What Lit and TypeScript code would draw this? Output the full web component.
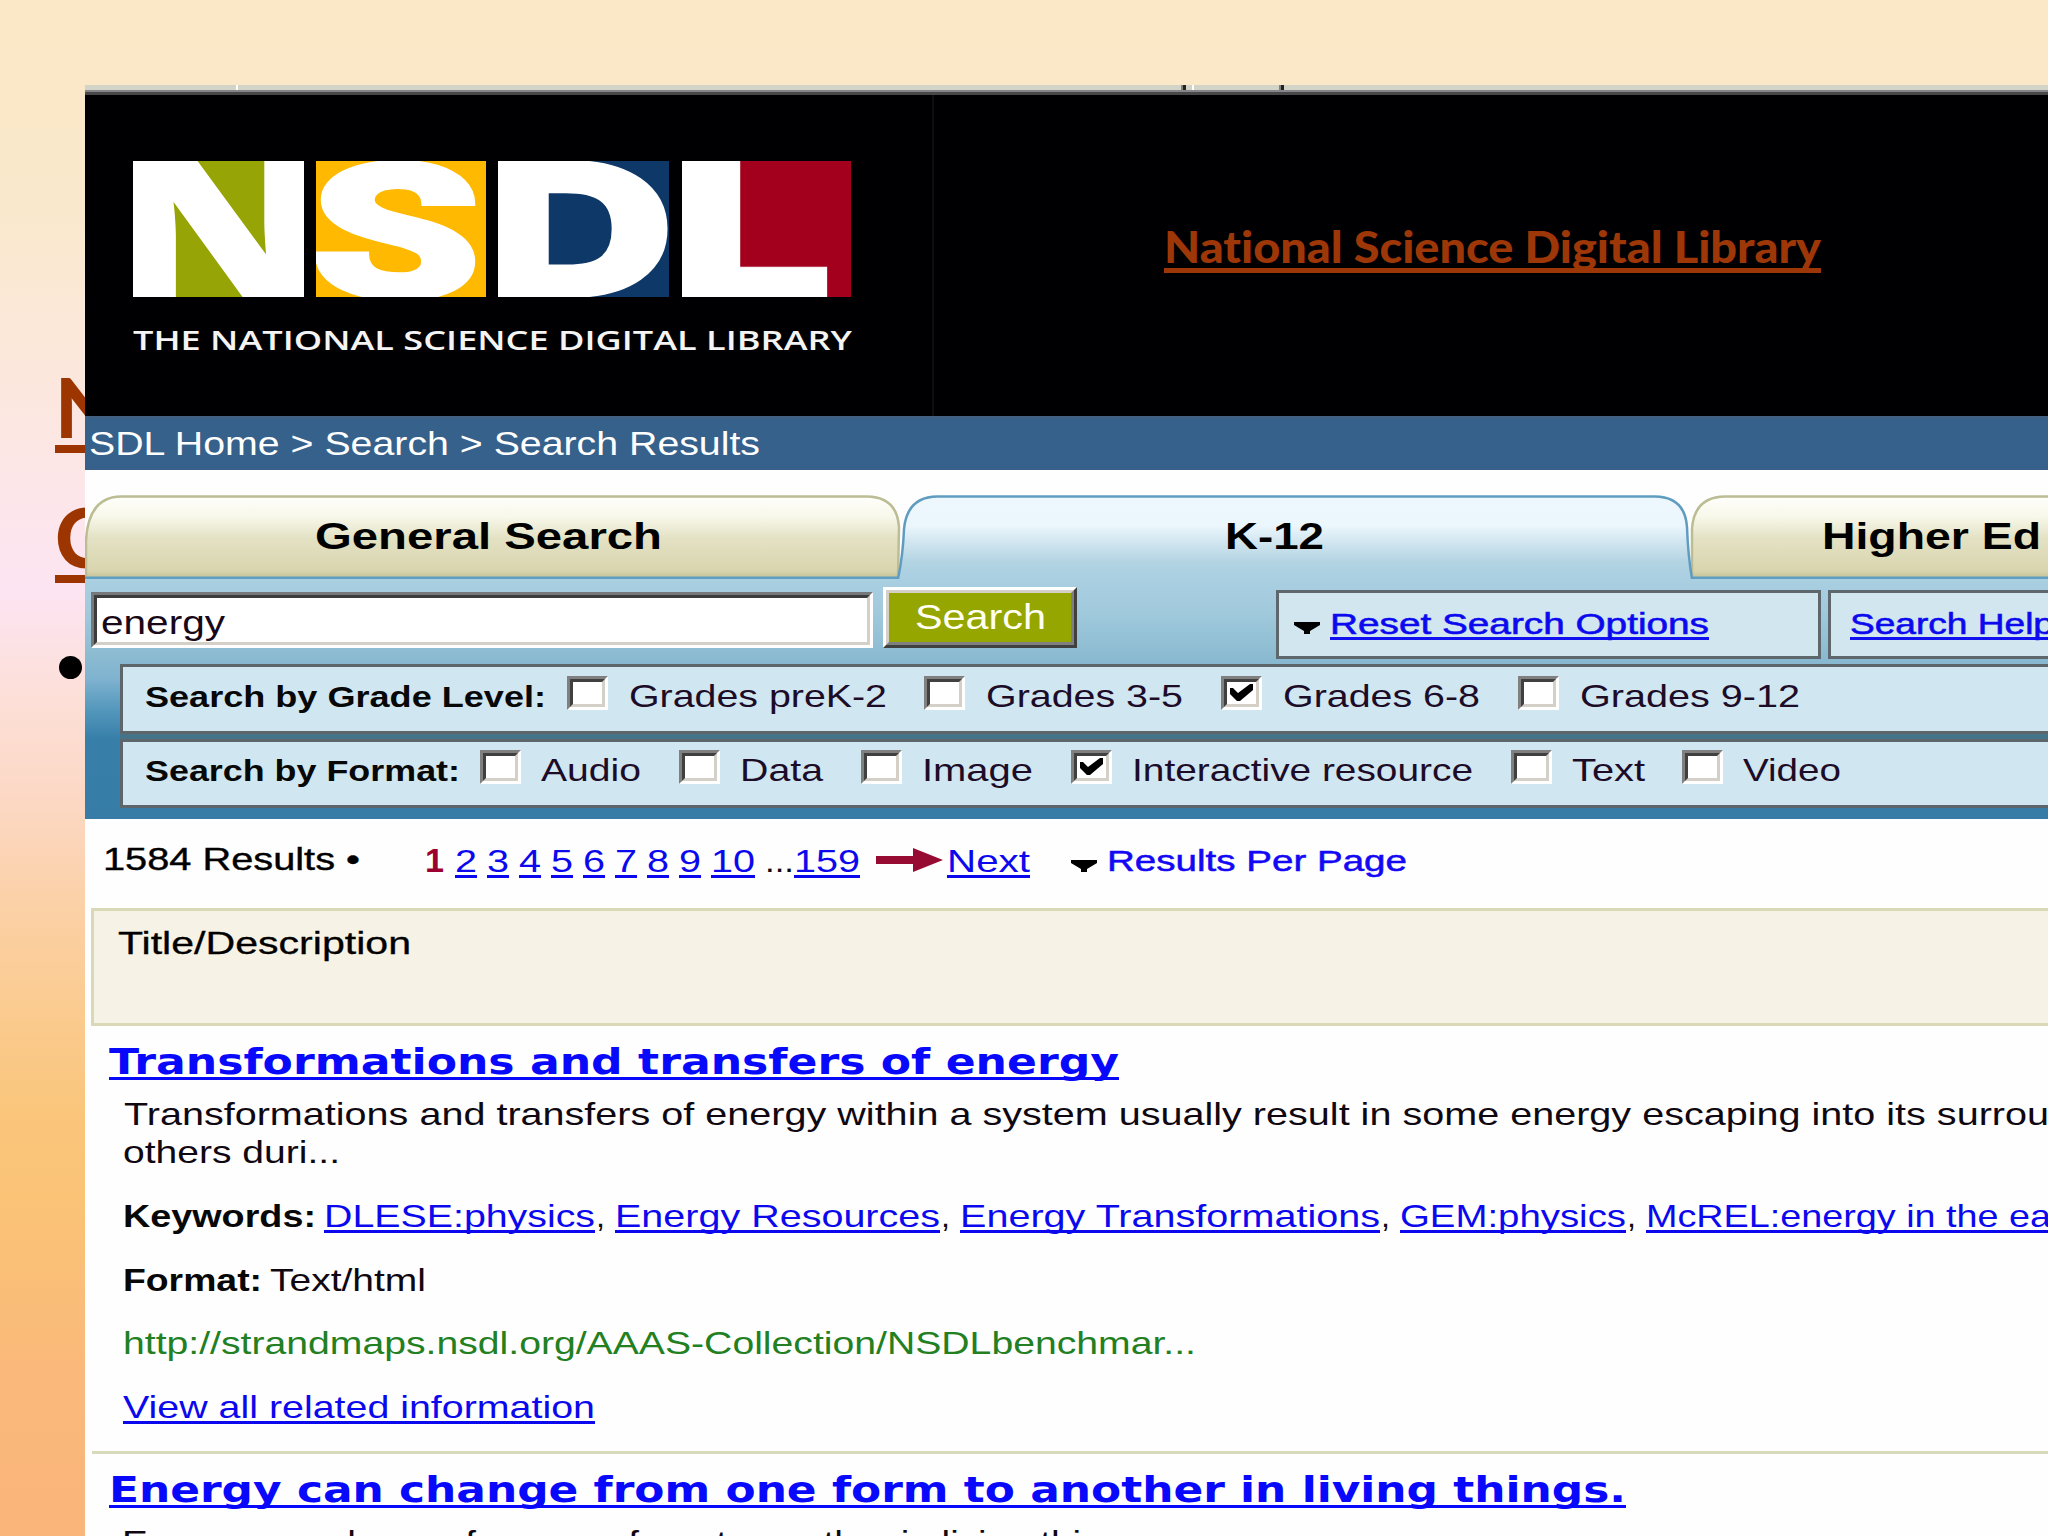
import { LitElement, html, svg, css, nothing } from "lit";
import { customElement, property } from "lit/decorators.js";

/** Single line of text stretched horizontally to an exact width. */
@customElement("fit-text")
class FitText extends LitElement {
  @property() text = "";
  @property({ type: Number }) w = 100;
  @property({ type: Number }) gap = 0;

  static styles = css`
    :host { display: block; flex: none; white-space: nowrap; font-variant-ligatures: none; }
    .run { display: inline-block; transform-origin: 0 50%; white-space: pre; vertical-align: top; }
    :host(.link) .run { text-decoration: underline; text-decoration-thickness: 2.6px; text-underline-offset: 3px; text-decoration-skip-ink: none; }
    :host(.banner) .run { text-decoration: underline; text-decoration-thickness: 4.6px; text-underline-offset: 5px; text-decoration-skip-ink: none; }
  `;

  updated() {
    const run = this.renderRoot.querySelector(".run") as HTMLElement;
    this.style.width = `${this.w}px`;
    this.style.marginLeft = `${this.gap}px`;
    run.style.transform = "none";
    const natural = run.getBoundingClientRect().width;
    if (natural) run.style.transform = `scaleX(${this.w / natural})`;
  }

  render() {
    return html`<span class="run">${this.text}</span>`;
  }
}

@customElement("check-box")
class CheckBox extends LitElement {
  @property({ type: Boolean }) checked = false;
  @property({ type: Number }) gap = 0;

  static styles = css`
    :host { display: block; flex: none; }
    .outer { box-sizing: border-box; width: 41px; height: 34px; border-style: solid; border-width: 3px; border-color: #808080 #fff #fff #808080; }
    .inner { box-sizing: border-box; width: 35px; height: 28px; border-style: solid; border-width: 3px; border-color: #404040 #d4d0c8 #d4d0c8 #404040; background: #fff; }
    svg { display: block; }
  `;

  updated() {
    this.style.marginLeft = `${this.gap}px`;
  }

  render() {
    return html`<div class="outer"><div class="inner">
      ${this.checked
        ? html`<svg width="29" height="22" viewBox="0 0 29 22"><path d="M3 6 L6 6 L11 11 L23 2 L26 2 L26 8 L13 19 L10 19 L3 12 Z" fill="#000" /></svg>`
        : nothing}
    </div></div>`;
  }
}

const t = (text: string, gap: number, w: number, cls = "") =>
  html`<fit-text class=${cls} .text=${text} .gap=${gap} .w=${w}></fit-text>`;

type Option = [label: string, boxGap: number, textGap: number, width: number, checked?: boolean];

const grades: Option[] = [
  ["Grades preK-2", 21, 21, 258],
  ["Grades 3-5", 37, 21, 197],
  ["Grades 6-8", 38, 21, 197, true],
  ["Grades 9-12", 38, 21, 220],
];

const formats: Option[] = [
  ["Audio", 20, 20, 100],
  ["Data", 38, 20, 83],
  ["Image", 38, 20, 111],
  ["Interactive resource", 38, 20, 341, true],
  ["Text", 38, 20, 73],
  ["Video", 37, 20, 98],
];

const tiles = [
  { ch: "N", w: 171, bg: "#96a406", font: "Open Sans", weight: 800, size: 190.5, x0: -24, sx: 1.4, stroke: 1 },
  { ch: "S", w: 170, bg: "#ffb900", font: "Roboto", weight: 900, size: 187, x0: -6, sx: 1.46, stroke: 5 },
  { ch: "D", w: 171, bg: "#0e3868", font: "Inter", weight: 900, size: 187, x0: -16, sx: 1.43, stroke: 2 },
  { ch: "L", w: 169, bg: "#a2001c", font: "Open Sans", weight: 800, size: 190.5, x0: -28, sx: 1.66, stroke: 1 },
];

@customElement("app-root")
class AppRoot extends LitElement {
  static styles = css`
    :host { display: block; font-family: "Liberation Sans", Arial, sans-serif; font-size: 32px; color: #100810; }
    * { box-sizing: border-box; }
    .slide {
      display: flex; width: 2048px; height: 1536px; overflow: hidden;
      background: linear-gradient(180deg, #fbe8c6 0, #fae8cc 200px, #fce7dc 370px, #fde6ec 520px, #fce4f2 590px, #fde0da 690px, #fcd8c4 800px, #fbcfa0 930px, #fac67c 1110px, #fac376 1200px, #fab97a 1370px, #fab57a 1536px);
    }
    .margin { flex: none; width: 85px; overflow: hidden; padding: 361px 0 0 55px; font-family: Lato, sans-serif; font-weight: 900; font-size: 81px; color: #9c3500; }
    .big { height: 130px; line-height: 92px; white-space: nowrap; text-decoration: underline; text-decoration-thickness: 8px; text-underline-offset: 7px; text-decoration-skip-ink: none; }
    .dot { width: 23px; height: 23px; border-radius: 50%; background: #000; margin: 35px 0 0 4px; }
    .page { flex: none; width: 1963px; height: 1451px; margin-top: 85px; background: #fefefe; overflow: hidden; display: flex; flex-direction: column; }
    .page > * { flex: none; }
    .strip { height: 10px; display: flex; background: linear-gradient(180deg, #d3d4c8 0 5px, #85868a 5px 7px, #48484a 7px 10px); }
    .tick { width: 2px; height: 5px; background: #fff; }
    .tick.dark { width: 5px; background: linear-gradient(90deg, #808080 40%, #222 40%); }
    .g1 { margin-left: 151px; } .g2 { margin-left: 943px; } .g3 { margin-left: 6px; } .g4 { margin-left: 85px; }
    .banner-area { height: 321px; background: #000002; display: flex; }
    .brand { width: 849px; border-right: 2px solid #0b0d10; padding: 66px 0 0 48px; }
    .tiles { display: flex; gap: 12.2px; }
    .tiles svg { display: block; flex: none; }
    .tagline { margin-top: 25px; font: 600 27.5px/36px "Open Sans", sans-serif; color: #f4f4f4; }
    .headline { padding-top: 120.5px; font: 900 44.5px/60px Lato, sans-serif; color: #9d3708; }
    .crumb { height: 54px; background: linear-gradient(180deg, #47607f 0, #35618b 4px, #35618c 50px, #3a5f88 54px); line-height: 56px; font-size: 32.5px; color: #fff; display: flex; }
    .tabs { height: 84px; margin-top: 25px; display: grid; font-weight: 700; font-size: 36px; line-height: 84px; color: #000; }
    .tabs > * { grid-area: 1 / 1; }
    .tabs svg { display: block; }
    .labels { display: flex; }
    .panel { height: 240px; background: linear-gradient(180deg, #a9cfe1 0, #a2cadd 30px, #8bbbd1 78px, #7fb2cf 100px, #5598bd 130px, #377fa9 160px, #367ca6 240px); }
    .search { display: flex; height: 85px; align-items: flex-start; }
    .search > * { flex: none; }
    .field { width: 782px; height: 56px; margin: 13px 0 0 6px; border-style: solid; border-width: 3px; border-color: #76797c #fff #fff #76797c; }
    .field-in { height: 50px; border-style: solid; border-width: 3px; border-color: #3c3c3c #d4d0c8 #d4d0c8 #3c3c3c; background: #fff; font-size: 33px; line-height: 49px; display: flex; color: #180818; }
    .btn { width: 194px; height: 61px; margin: 8px 0 0 10px; border-style: solid; border-width: 3px; border-color: #fff #404040 #404040 #fff; }
    .btn-in { height: 55px; border-style: solid; border-width: 3px; border-color: #d4d0c8 #808080 #808080 #d4d0c8; background: #96a600; color: #fffff2; font-size: 35px; line-height: 47px; display: flex; }
    .opt { height: 69px; margin-top: 11px; border: 3px solid #5e676c; background: #d1e6ef; display: flex; font-size: 29.5px; line-height: 61px; -webkit-text-stroke: 0.6px #1010f0; }
    .reset { width: 545px; margin-left: 199px; }
    .help { width: 240px; margin-left: 7px; }
    .rows { margin-left: 35px; background: #45748a; display: flex; flex-direction: column; gap: 5px; width: 1940px; }
    .row { height: 70px; border: 3px solid #5c666b; background: #d0e6f0; display: flex; line-height: 59px; }
    .row check-box { margin-top: 9px; }
    .row.second { height: 69px; line-height: 57px; }
    .row.second check-box { margin-top: 8px; }
    .lead { font-weight: 700; font-size: 30px; color: #080808; }
    .plain { -webkit-text-stroke: 0; color: #1c0c28; }
    .link { color: #0c08ee; }
    .caret { line-height: 0; }
    .caret svg { display: block; }
    .in-opt { margin: 29px 0 0 15px; }
    .in-pager { margin: 41px 0 0 41px; }
    .pager { display: flex; height: 89px; line-height: 85px; padding-left: 18px; }
    .count { margin-top: -2px; color: #000; -webkit-text-stroke: 0.4px #000; }
    .now { font-weight: 700; font-size: 33px; color: #9c0030; margin-top: -1px; }
    .arrow { display: block; flex: none; margin: 29px 0 0 16px; }
    .per { font-size: 29.5px; margin-top: -1px; color: #1408f4; -webkit-text-stroke: 0.5px #1408f4; }
    .head { height: 118px; margin-left: 6px; width: 1970px; border: 3px solid #d9d9b7; background: #f6f2e5; line-height: 64px; display: flex; color: #000; -webkit-text-stroke: 0.3px #000; }
    .title { height: 69px; line-height: 72px; display: flex; font-family: "DejaVu Sans", Verdana, sans-serif; font-weight: 700; font-size: 35px; }
    .title .link { color: #0808fa; }
    .line { height: 38px; line-height: 38px; display: flex; }
    .sp { margin-top: 26px; }
    .sp.url { margin-top: 25px; color: #228022; }
    .rule { height: 3px; background: #d7dbbb; margin: 25px 0 0 7px; }
    .key { font-weight: 700; color: #080808; }
  `;

  private tile(d: (typeof tiles)[number]) {
    return html`<svg width=${d.w} height="136" viewBox="0 0 ${d.w} 136">
      <rect width=${d.w} height="136" fill=${d.bg} />
      ${svg`<text transform="translate(${d.x0} 136) scale(${d.sx} 1)" font-family=${d.font} font-weight=${d.weight} font-size=${d.size} fill="#fff" stroke="#fff" stroke-width=${d.stroke}>${d.ch}</text>`}
    </svg>`;
  }

  private caret(place: string) {
    return html`<div class="caret ${place}"><svg width="26" height="12" viewBox="0 0 26 12"><path d="M0 0H26V3L16 9V12H10V9L0 3Z" fill="#000" /></svg></div>`;
  }

  private options(list: Option[]) {
    return list.map(([label, bg, tg, w, on]) => html`<check-box .gap=${bg} .checked=${!!on}></check-box>${t(label, tg, w, "plain")}`);
  }

  private tabShapes() {
    return html`<svg width="1963" height="84" viewBox="0 0 1963 84">
      <defs>
        <linearGradient id="tan" x1="0" y1="0" x2="0" y2="1">
          <stop offset="0" stop-color="#fffffb" /><stop offset=".25" stop-color="#f7f7ea" />
          <stop offset=".5" stop-color="#e4e2c4" /><stop offset=".9" stop-color="#d8d5ae" /><stop offset="1" stop-color="#c2bd94" />
        </linearGradient>
        <linearGradient id="sky" x1="0" y1="0" x2="0" y2="1">
          <stop offset="0" stop-color="#edf7fd" /><stop offset=".35" stop-color="#ecf6fd" />
          <stop offset=".6" stop-color="#cbe2ed" /><stop offset=".8" stop-color="#b2d3e2" /><stop offset="1" stop-color="#a9cfe1" />
        </linearGradient>
      </defs>
      <path d="M1 84V46Q3 2 36 1.5H782Q812 2 814 32L813 84Z" fill="url(#tan)" stroke="#bcbd94" stroke-width="2.5" />
      <path d="M1607 84V34Q1609 2 1640 1.5H1980V84Z" fill="url(#tan)" stroke="#bcbd94" stroke-width="2.5" />
      <path d="M0 83H814M1604 83H1963" stroke="#5f9fc2" stroke-width="3" />
      <path d="M814 84Q818 60 819 34Q822 2 852 1.5H1570Q1600 2 1602 32Q1603 60 1607 84" fill="url(#sky)" />
      <path d="M813 84Q818 60 819 34Q822 2 852 1.5H1570Q1600 2 1602 32Q1603 60 1607 84" fill="none" stroke="#5f9dc0" stroke-width="2.5" />
    </svg>`;
  }

  render() {
    return html`<div class="slide">
      <div class="margin">
        <div class="big">N</div>
        <div class="big">C</div>
        <div class="dot"></div>
      </div>
      <div class="page">
        <div class="strip">
          <div class="tick g1"></div><div class="tick dark g2"></div><div class="tick g3"></div><div class="tick dark g4"></div>
        </div>
        <div class="banner-area">
          <div class="brand">
            <div class="tiles">${tiles.map((d) => this.tile(d))}</div>
            <div class="tagline">${t("THE NATIONAL SCIENCE DIGITAL LIBRARY", 0, 719)}</div>
          </div>
          <div class="headline">${t("National Science Digital Library", 230, 657, "banner")}</div>
        </div>
        <div class="crumb">${t("SDL Home > Search > Search Results", 4, 671)}</div>
        <div class="tabs">
          ${this.tabShapes()}
          <div class="labels">${t("General Search", 230, 347)}${t("K-12", 563, 99)}${t("Higher Ed", 498, 219)}</div>
        </div>
        <div class="panel">
          <div class="search">
            <div class="field"><div class="field-in">${t("energy", 4, 124)}</div></div>
            <div class="btn"><div class="btn-in">${t("Search", 26, 131)}</div></div>
            <div class="opt reset">
              ${this.caret("in-opt")}
              ${t("Reset Search Options", 10, 379, "link")}
            </div>
            <div class="opt help">${t("Search Help", 19, 204, "link")}</div>
          </div>
          <div class="rows">
            <div class="row">${t("Search by Grade Level:", 22, 401, "lead")}${this.options(grades)}</div>
            <div class="row second">${t("Search by Format:", 22, 315, "lead")}${this.options(formats)}</div>
          </div>
        </div>
        <div class="pager">
          ${t("1584 Results •", 0, 257, "count")}
          ${t("1", 65, 19, "now")}
          ${["2", "3", "4", "5", "6", "7", "8", "9"].map((n, i) => t(n, i ? 10 : 11, 22, "link"))}
          ${t("10", 10, 44, "link")}${t("...", 10, 29)}${t("159", 0, 66, "link")}
          <svg class="arrow" width="67" height="24" viewBox="0 0 67 24"><path d="M0 8H37V0L67 12L37 24V16H0Z" fill="#970a32" /></svg>
          ${t("Next", 4, 83, "link")}
          ${this.caret("in-pager")}
          ${t("Results Per Page", 10, 300, "per")}
        </div>
        <div class="head">${t("Title/Description", 24, 293)}</div>
        <div class="title">${t("Transformations and transfers of energy", 24, 1010, "link")}</div>
        <div class="line">${t("Transformations and transfers of energy within a system usually result in some energy escaping into its surrou", 39, 1925)}</div>
        <div class="line">${t("others duri...", 38, 217)}</div>
        <div class="line sp">
          ${t("Keywords:", 38, 193, "key")}${t("DLESE:physics", 8, 271, "link")}${t(",", 1, 9)}
          ${t("Energy Resources", 10, 325, "link")}${t(",", 1, 9)}
          ${t("Energy Transformations", 10, 420, "link")}${t(",", 1, 9)}
          ${t("GEM:physics", 10, 226, "link")}${t(",", 1, 9)}
          ${t("McREL:energy in the ea", 10, 405, "link")}
        </div>
        <div class="line sp">${t("Format:", 38, 139, "key")}${t("Text/html", 8, 156)}</div>
        <div class="line sp url">${t("http://strandmaps.nsdl.org/AAAS-Collection/NSDLbenchmar...", 38, 1073)}</div>
        <div class="line sp">${t("View all related information", 38, 472, "link")}</div>
        <div class="rule"></div>
        <div class="title">${t("Energy can change from one form to another in living things.", 24, 1517, "link")}</div>
        <div class="line">${t("Energy can change from one form to another in living things.", 37, 1032)}</div>
      </div>
    </div>`;
  }
}
